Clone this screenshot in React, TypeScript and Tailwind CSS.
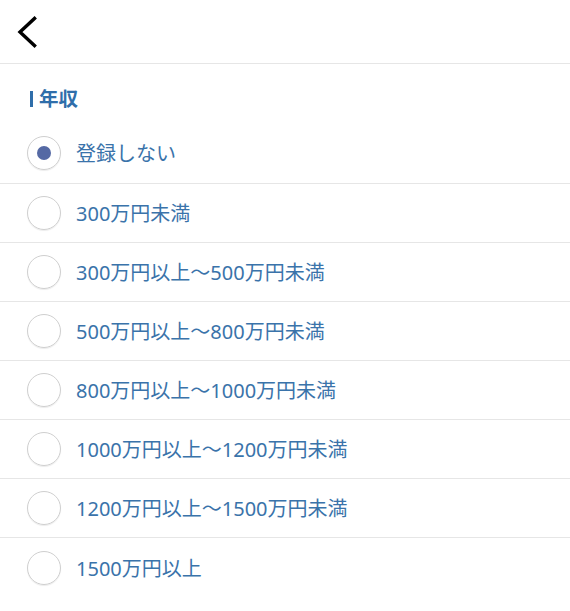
import { useState } from 'react';

const options = [
  '登録しない',
  '300万円未満',
  '300万円以上〜500万円未満',
  '500万円以上〜800万円未満',
  '800万円以上〜1000万円未満',
  '1000万円以上〜1200万円未満',
  '1200万円以上〜1500万円未満',
  '1500万円以上',
];

export default function App() {
  const [selected, setSelected] = useState(0);

  return (
    <div className="min-h-[611px] w-[570px] bg-white font-['Noto_Sans','Noto_Sans_CJK_JP',sans-serif]">
      <header className="flex h-[64px] items-center border-b border-[#e6e6e6] pl-[12px]">
        <button className="flex h-[40px] w-[30px] items-center justify-center">
          <svg width="22" height="32" viewBox="0 0 22 32" fill="none">
            <polyline points="18.5,2.5 4,16 18.5,29.5" stroke="#000" strokeWidth="3.4" strokeLinecap="square" />
          </svg>
        </button>
      </header>

      <div className="flex h-[58px] items-center pl-[30px] pt-[12px]">
        <span className="mr-[6px] h-[16px] w-[3px] bg-[#2f6eaa]" />
        <span className="text-[19.5px] font-bold leading-none text-[#2f6eaa]">年収</span>
      </div>

      <ul>
        {options.map((label, i) => (
          <li
            key={label}
            onClick={() => setSelected(i)}
            className={`flex cursor-pointer items-center ${i === 0 ? 'h-[62px]' : 'h-[59px]'} ${
              i < options.length - 1 ? 'border-b border-[#e6e6e6]' : ''
            }`}
          >
            <span className="ml-[27px] flex h-[34px] w-[34px] items-center justify-center rounded-full border border-[#cfcfcf] shadow-[0_1px_1px_rgba(0,0,0,0.08)]">
              {selected === i && <span className="h-[14px] w-[14px] rounded-full bg-[#5569a4]" />}
            </span>
            <span className="ml-[15px] translate-y-[1px] text-[20px] leading-none text-[#3a73aa]">{label}</span>
          </li>
        ))}
      </ul>
    </div>
  );
}
